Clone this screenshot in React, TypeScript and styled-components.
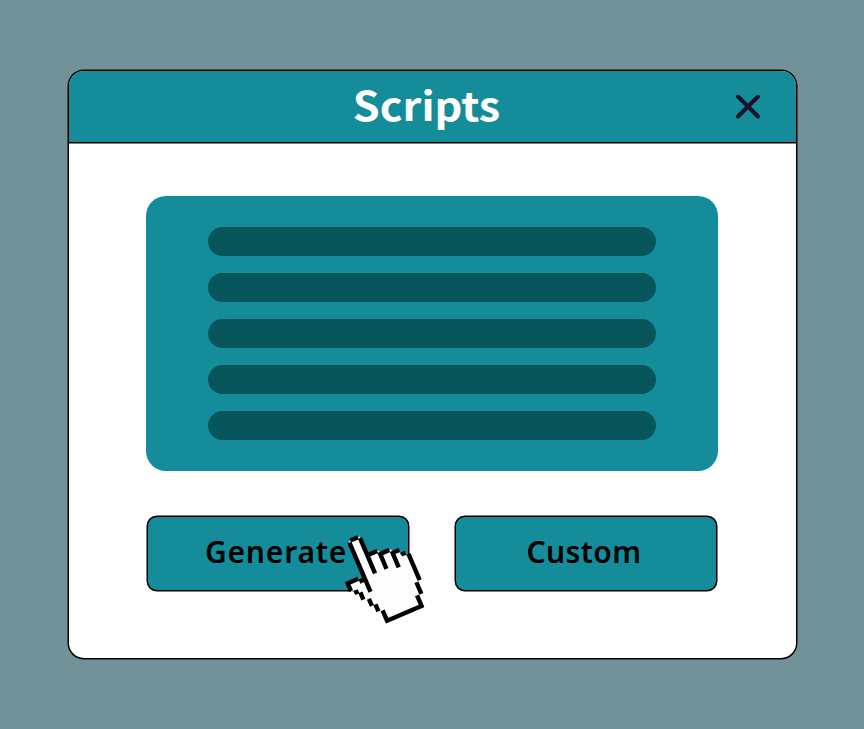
import styled, { createGlobalStyle } from "styled-components";

const LINES = [1, 2, 3, 4, 5];

const CloseIcon = () => (
  <svg width="24" height="24" viewBox="0 0 24 24" fill="none">
    <path d="M2 1.5L22 21.5M22 1.5L2 21.5" stroke="#15142a" strokeWidth="4" strokeLinecap="round" />
  </svg>
);

const HandCursor = () => (
  <Pointer width="100" height="105" viewBox="0 0 300 315" fill="none">
    <g transform="matrix(10.57 -4.52 4.52 10.57 46 59)">
      <path
        fill="#fdfdfd"
        d="M0 -1H3V4.3H6.2V5.3H9.3V6.3H11V7.6H12.3V8.6H13V15.5H12V19H10.8V22H1V19H0V17H-1.1V15H-2.5V13H-3.4V11.5H-4.6V9H-1.5V9.8H0Z"
      />
      <path
        stroke="#000"
        strokeWidth="1.15"
        d="M0 -.6V13.4M.4 -1H2.6M3 -.6V9.4M3.5 4.3H5.8M6.2 4.8V9.5M6.6 5.3H8.8M9.3 5.8V10.4M9.7 6.3H11.2M11.2 7.6H12.4M13 8.2V15.6M12 15.8V19.1M10.8 19V22.5M.5 22H11.3M1 19.1V22.5M-.1 16.9V18.9M-1.1 14.9V16.9M-2.5 12.5V14.5M-4 12H-2.8M-4.6 8.5V11.2M-5 9H-1.6M-1.6 9.8H-.4"
      />
    </g>
  </Pointer>
);

const App = () => {
  return (
    <Page>
      <GlobalStyle />
      <Window>
        <TitleBar>
          <Title>Scripts</Title>
          <CloseButton aria-label="Close">
            <CloseIcon />
          </CloseButton>
        </TitleBar>
        <Content>
          <ScriptList>
            {LINES.map(line => <ScriptLine key={line} />)}
          </ScriptList>
          <Actions>
            <ActionButton $spacing={0.8}>
              Generate
              <HandCursor />
            </ActionButton>
            <ActionButton $spacing={0.4}>Custom</ActionButton>
          </Actions>
        </Content>
      </Window>
    </Page>
  );
}

export default App;


const GlobalStyle = createGlobalStyle`
  * {
    box-sizing: border-box;
  }
  body {
    margin: 0;
    background-color: #729299;
  }
`
const Page = styled.div`
  height: 729px;
  padding: 71px 68px 0 69px;
`
const Window = styled.div`
  height: 587px;
  background-color: white;
  border-radius: 15px;
  box-shadow: 0 0 0 1.5px black;
`
const TitleBar = styled.div`
  display: grid;
  grid-template-columns: 96px 1fr 96px;
  align-items: center;
  height: 71px;
  background-color: #158c9a;
  border-radius: 15px 15px 0 0;
  box-shadow: 0 1.5px 0 black;
`
const Title = styled.div`
  grid-column: 2;
  padding: 0 11px 5px 0;
  color: white;
  font-family: "Noto Sans CJK JP", sans-serif;
  font-size: 40px;
  font-weight: 700;
  line-height: 60px;
  text-align: center;
  transform: scaleX(1.08);
`
const CloseButton = styled.button`
  display: flex;
  justify-content: center;
  padding: 0;
  border: none;
  background: none;
  cursor: pointer;
`
const Content = styled.div`
  padding: 54px 78px 0 77px;
`
const ScriptList = styled.div`
  display: flex;
  flex-direction: column;
  gap: 16.5px;
  height: 275px;
  padding: 31px 62px;
  background-color: #158c9a;
  border-radius: 20px;
`
const ScriptLine = styled.div`
  height: 29.5px;
  background-color: #06555b;
  border-radius: 15px;
`
const Actions = styled.div`
  display: flex;
  justify-content: space-between;
  padding: 46px 2px 0;
`
const ActionButton = styled.button<{ $spacing: number }>`
  position: relative;
  width: 260px;
  height: 73px;
  padding: 0 4px 5px 0;
  border: none;
  border-radius: 9px;
  box-shadow: 0 0 0 1.5px black;
  background-color: #158c9a;
  color: black;
  font-family: "Noto Sans", sans-serif;
  font-size: 30px;
  font-weight: 600;
  letter-spacing: ${props => props.$spacing}px;
`
const Pointer = styled.svg`
  position: absolute;
  left: 187px;
  top: 8px;
`
